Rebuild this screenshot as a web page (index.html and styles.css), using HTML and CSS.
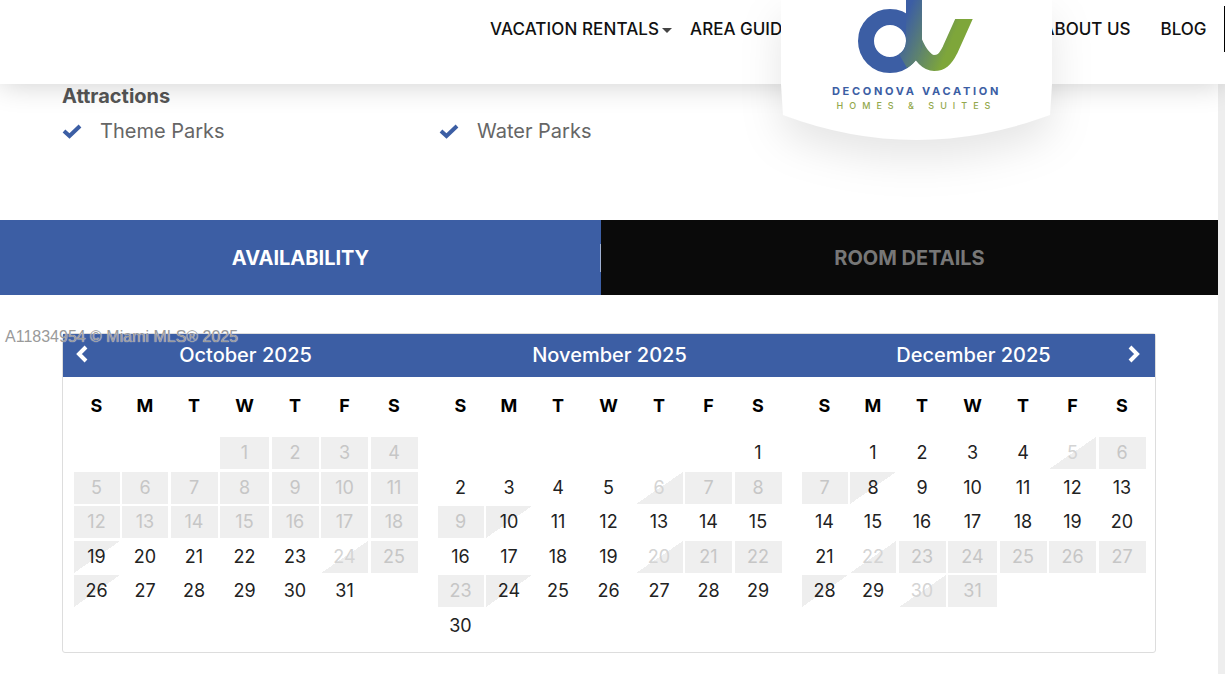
FILE: index.html
```html
<!DOCTYPE html>
<html lang="en">
<head>
    <meta charset="UTF-8">
    <meta name="viewport" content="width=device-width, initial-scale=1.0">
    <title>Deconova Vacation Homes &amp; Suites</title>
    <link rel="stylesheet" href="styles.css">
</head>
<body>

    <div class="header">
        <div class="nav-item nav-rentals">VACATION RENTALS<span class="caret"></span></div>
        <div class="nav-item nav-guides">AREA GUIDES<span class="caret"></span></div>
        <div class="nav-item nav-about">ABOUT US</div>
        <div class="nav-item nav-blog">BLOG</div>
        <div class="header-line"></div>

        <!-- Logo badge hangs below the header -->
        <div class="logo">
            <svg class="logo-art" width="271" height="140" viewBox="781 0 271 140">
                <defs>
                    <linearGradient id="logoGrad" gradientUnits="userSpaceOnUse" x1="900" y1="30" x2="948" y2="50">
                        <stop offset="0" stop-color="#3c5ea4"/>
                        <stop offset="1" stop-color="#7ea63a"/>
                    </linearGradient>
                    <clipPath id="logoTop"><rect x="781" y="19" width="271" height="121"/></clipPath>
                </defs>
                <path d="M781 0 H1052 V84 L1050 115 Q916 165 783 115 L781 84 Z" fill="#fff"/>
                <path d="M968 10 L950 50 C945 60 941 63 934 63 C926 63 919 53 914 41" fill="none" stroke="url(#logoGrad)" stroke-width="16" clip-path="url(#logoTop)"/>
                <circle cx="890" cy="41" r="24" fill="none" stroke="#3c5ea4" stroke-width="16"/>
                <path d="M914 0 V41 C914 50 910 57 903 61" fill="none" stroke="url(#logoGrad)" stroke-width="16"/>
            </svg>
            <div class="logo-name">DECONOVA VACATION</div>
            <div class="logo-sub">HOMES &amp; SUITES</div>
        </div>
    </div>

    <div class="layout">
        <div class="main">
            <!-- Attractions -->
            <div class="details">
                <h3>Attractions</h3>
                <div class="amenities">
                    <div class="amenity">
                        <svg class="check" width="20" height="15" viewBox="0 0 20 15"><path d="M2 7 L7.5 12 L18 2" fill="none" stroke="#3c5ea4" stroke-width="4"/></svg>
                        Theme Parks
                    </div>
                    <div class="amenity">
                        <svg class="check" width="20" height="15" viewBox="0 0 20 15"><path d="M2 7 L7.5 12 L18 2" fill="none" stroke="#3c5ea4" stroke-width="4"/></svg>
                        Water Parks
                    </div>
                </div>
            </div>

            <!-- Tabs -->
            <div class="tabs">
                <div class="tab tab-active">AVAILABILITY</div>
                <div class="tab">ROOM DETAILS</div>
            </div>

            <!-- Calendar -->
            <div class="calendar">
                <div class="cal-head">
                    <div class="cal-title">October 2025</div>
                    <div class="cal-title">November 2025</div>
                    <div class="cal-title">December 2025</div>
                    <svg class="arrow arrow-prev" width="14" height="18" viewBox="0 0 14 18"><path d="M11 2 L4 9 L11 16" fill="none" stroke="#fff" stroke-width="4"/></svg>
                    <svg class="arrow arrow-next" width="14" height="18" viewBox="0 0 14 18"><path d="M3 2 L10 9 L3 16" fill="none" stroke="#fff" stroke-width="4"/></svg>
                </div>

                <div class="months">
                    <div class="month">
                        <div class="weekdays"><span>S</span><span>M</span><span>T</span><span>W</span><span>T</span><span>F</span><span>S</span></div>
                        <div class="days">
                            <span></span><span></span><span></span><span class="off">1</span><span class="off">2</span><span class="off">3</span><span class="off">4</span>
                            <span class="off">5</span><span class="off">6</span><span class="off">7</span><span class="off">8</span><span class="off">9</span><span class="off">10</span><span class="off">11</span>
                            <span class="off">12</span><span class="off">13</span><span class="off">14</span><span class="off">15</span><span class="off">16</span><span class="off">17</span><span class="off">18</span>
                            <span class="half-in">19</span><span>20</span><span>21</span><span>22</span><span>23</span><span class="half-out">24</span><span class="off">25</span>
                            <span class="half-in">26</span><span>27</span><span>28</span><span>29</span><span>30</span><span>31</span><span></span>
                        </div>
                    </div>

                    <div class="month">
                        <div class="weekdays"><span>S</span><span>M</span><span>T</span><span>W</span><span>T</span><span>F</span><span>S</span></div>
                        <div class="days">
                            <span></span><span></span><span></span><span></span><span></span><span></span><span>1</span>
                            <span>2</span><span>3</span><span>4</span><span>5</span><span class="half-out">6</span><span class="off">7</span><span class="off">8</span>
                            <span class="off">9</span><span class="half-in">10</span><span>11</span><span>12</span><span>13</span><span>14</span><span>15</span>
                            <span>16</span><span>17</span><span>18</span><span>19</span><span class="half-out">20</span><span class="off">21</span><span class="off">22</span>
                            <span class="off">23</span><span class="half-in">24</span><span>25</span><span>26</span><span>27</span><span>28</span><span>29</span>
                            <span>30</span><span></span><span></span><span></span><span></span><span></span><span></span>
                        </div>
                    </div>

                    <div class="month">
                        <div class="weekdays"><span>S</span><span>M</span><span>T</span><span>W</span><span>T</span><span>F</span><span>S</span></div>
                        <div class="days">
                            <span></span><span>1</span><span>2</span><span>3</span><span>4</span><span class="half-out">5</span><span class="off">6</span>
                            <span class="off">7</span><span class="half-in">8</span><span>9</span><span>10</span><span>11</span><span>12</span><span>13</span>
                            <span>14</span><span>15</span><span>16</span><span>17</span><span>18</span><span>19</span><span>20</span>
                            <span>21</span><span class="half-out">22</span><span class="off">23</span><span class="off">24</span><span class="off">25</span><span class="off">26</span><span class="off">27</span>
                            <span class="half-in">28</span><span>29</span><span class="half-out">30</span><span class="off">31</span><span></span><span></span><span></span>
                        </div>
                    </div>
                </div>
            </div>
        </div>
        <div class="scroll-track"></div>
    </div>

    <div class="watermark">A11834954 © Miami MLS® 2025</div>

</body>
</html>
```

FILE: styles.css
```css
body {
    font-family: Inter, "Noto Sans", sans-serif;
    background-color: white;
    margin: 0;
    padding: 0;
    height: 674px;
    overflow: hidden;
    position: relative;
}

.header {
    position: relative;
    z-index: 2;
    display: flex;
    align-items: flex-start;
    height: 84px;
    padding-left: 490px;
    background-color: white;
    box-shadow: 0px 0px 30px rgba(0, 0, 0, 0.2);
}

.nav-item {
    color: #111;
    font-size: 17px;
    font-weight: 500;
    line-height: 20px;
    margin-top: 19px;
    white-space: nowrap;
}

.nav-rentals {
    letter-spacing: 0.1px;
}

.nav-guides {
    margin-left: 18px;
}

.nav-about {
    margin-left: 226px;
}

.nav-blog {
    margin-left: 30px;
}

.caret {
    display: inline-block;
    margin-left: 3px;
    vertical-align: middle;
    border-top: 5px solid #444;
    border-left: 5px solid transparent;
    border-right: 5px solid transparent;
}

.header-line {
    position: absolute;
    right: 0;
    top: 6px;
    width: 1px;
    height: 46px;
    background-color: black;
}

.logo {
    position: absolute;
    left: 781px;
    top: 0;
    width: 271px;
    height: 140px;
    text-align: center;
}

.logo-art {
    position: absolute;
    left: 0;
    top: 0;
    overflow: visible;
    filter: drop-shadow(0px 18px 20px rgba(0, 0, 0, 0.1));
}

.logo-name {
    position: relative;
    padding-top: 85px;
    color: #3c5ea4;
    font-size: 11px;
    font-weight: 700;
    line-height: 13px;
    letter-spacing: 2.7px;
}

.logo-sub {
    position: relative;
    padding-top: 2px;
    color: #93a84c;
    font-size: 9px;
    font-weight: 500;
    line-height: 11px;
    letter-spacing: 6px;
}

.layout {
    display: flex;
}

.main {
    width: 1218px;
}

.scroll-track {
    width: 7px;
    height: 590px;
    background-color: #eeeeee;
}

.details {
    padding-left: 62px;
    height: 136px;
}

.details h3 {
    margin: 0;
    color: #555;
    font-size: 20px;
    font-weight: 700;
    line-height: 24px;
}

.amenities {
    display: flex;
    margin-top: 8px;
}

.amenity {
    display: flex;
    align-items: center;
    gap: 18px;
    width: 377px;
    color: #666;
    font-size: 20px;
    line-height: 30px;
}

.tabs {
    display: flex;
    height: 75px;
}

.tab {
    display: flex;
    align-items: center;
    justify-content: center;
    flex: 1;
    background-color: #0a0a0a;
    color: #777;
    font-size: 20px;
    font-weight: 700;
}

.tab-active {
    flex: none;
    position: relative;
    width: 601px;
    background-color: #3c5ea4;
    color: white;
}

.tab-active::after {
    content: "";
    position: absolute;
    right: 0;
    top: 24px;
    width: 1px;
    height: 28px;
    background-color: #9fb0d2;
}

.calendar {
    width: 1092px;
    margin: 38px 0 0 62px;
    border: 1px solid #dddddd;
    border-radius: 3px;
}

.cal-head {
    position: relative;
    display: flex;
    gap: 20px;
    height: 43px;
    padding-left: 10.5px;
    background-color: #3c5ea4;
}

.cal-title {
    width: 344px;
    color: white;
    font-size: 20px;
    font-weight: 500;
    line-height: 43px;
    text-align: center;
}

.arrow {
    position: absolute;
    top: 11px;
}

.arrow-prev {
    left: 12px;
}

.arrow-next {
    right: 14px;
}

.months {
    display: flex;
    gap: 20px;
    padding: 15px 0 10px 10.5px;
}

.month {
    width: 344px;
}

.weekdays,
.days {
    display: grid;
    grid-template-columns: 46px 46px 47px 49px 47px 47px 47px;
    column-gap: 2.5px;
    text-align: center;
}

.weekdays {
    height: 28px;
    margin-bottom: 17px;
    color: black;
    font-size: 18px;
    font-weight: 700;
    line-height: 28px;
}

.days {
    grid-auto-rows: 32px;
    row-gap: 2.5px;
    color: #222;
    font-size: 18px;
    line-height: 32px;
}

.off {
    background-color: #efefef;
    color: #c6c6c6;
}

.half-in {
    background: linear-gradient(to bottom right, #eeeeee 50%, transparent 50%);
}

.half-out {
    background: linear-gradient(to top left, #eeeeee 50%, transparent 50%);
    color: #d4d4d4;
}

.watermark {
    position: absolute;
    z-index: 3;
    left: 5px;
    top: 327px;
    color: #9a9a9a;
    font-family: "Liberation Sans", Arial, sans-serif;
    font-size: 16px;
    line-height: 20px;
    white-space: nowrap;
    text-shadow: 0px 0px 1px white;
}
```
